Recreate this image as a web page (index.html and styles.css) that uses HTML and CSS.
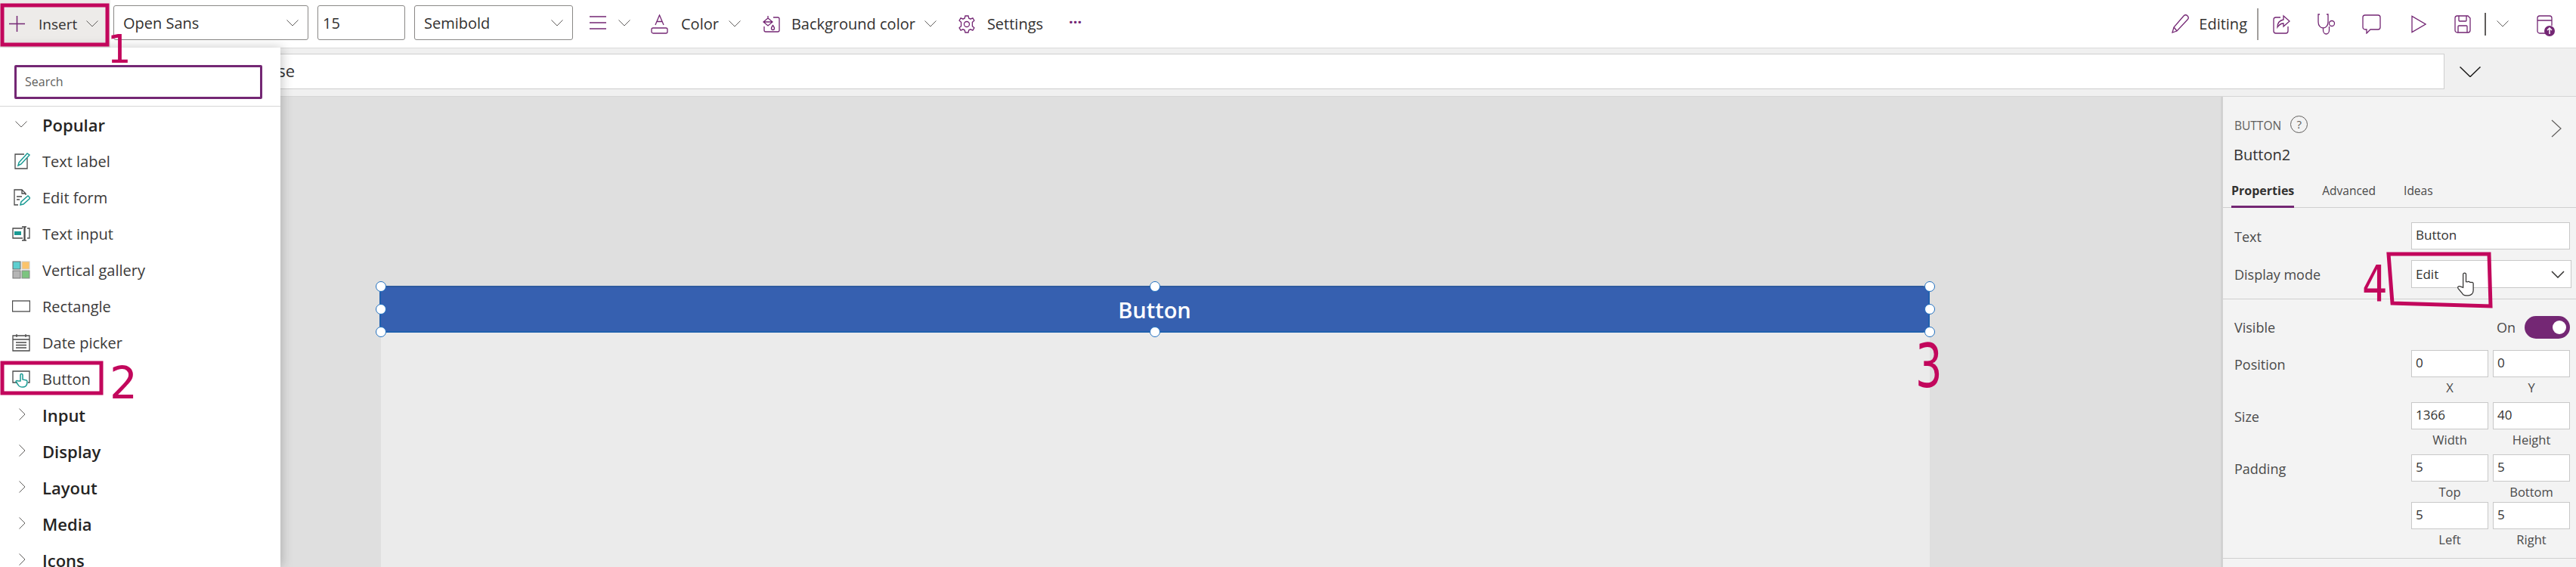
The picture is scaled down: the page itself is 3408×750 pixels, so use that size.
FILE: index.html
```html
<!DOCTYPE html>
<html lang="en">
    <head>
        <meta charset="UTF-8" />
        <title>Power Apps Studio</title>
        <link rel="stylesheet" href="styles.css">
    </head>
    <body>
        <header class="toolbar">
            <div class="insert-btn">
                <svg class="ic-plus" viewBox="0 0 21 21"><path d="M10.5 0v21M0 10.5h21"/></svg>
                <span class="insert-label">Insert</span>
                <svg class="chev insert-chev" viewBox="0 0 16 9"><path d="M.5.5 8 8 15.5.5"/></svg>
            </div>
            <div class="tb-field font-field">Open Sans<svg class="chev" viewBox="0 0 16 9"><path d="M.5.5 8 8 15.5.5"/></svg></div>
            <div class="tb-field size-field">15</div>
            <div class="tb-field weight-field">Semibold<svg class="chev" viewBox="0 0 16 9"><path d="M.5.5 8 8 15.5.5"/></svg></div>

            <svg class="ic ic-align" viewBox="0 0 22 18"><path d="M0 1h22M0 9h22M0 17h22"/></svg>
            <svg class="chev align-chev" viewBox="0 0 16 9"><path d="M.5.5 8 8 15.5.5"/></svg>
            <svg class="ic ic-color" viewBox="0 0 23 26"><path d="M6 14 11.5 1 17 14M8 9.500h7"/><rect x="1" y="18" width="21" height="7" rx="2"/></svg>
            <span class="tb-text color-label">Color</span>
            <svg class="chev color-chev" viewBox="0 0 16 9"><path d="M.5.5 8 8 15.5.5"/></svg>
            <svg class="ic ic-fill" viewBox="0 0 24 24"><path d="M15 3h6a2 2 0 0 1 2 2v15a2 2 0 0 1-2 2H5a2 2 0 0 1-2-2v-5"/><path d="M8 1v3L2 9l6 5 6-5-6-5M2 9h12"/><path d="M14.500 13.500c-1.500 2-2 3-2 4a2 2 0 0 0 4 0c0-1-.5-2-2-4z"/></svg>
            <span class="tb-text fill-label">Background color</span>
            <svg class="chev fill-chev" viewBox="0 0 16 9"><path d="M.5.5 8 8 15.5.5"/></svg>
            <svg class="ic ic-gear" viewBox="0 0 24 24"><circle cx="12" cy="12" r="3.500"/><path d="M10 1h4l.8 3.200 2.200 1 2.900-1.400 2 3.400-2.500 2.200v5.200l2.500 2.200-2 3.400-2.900-1.400-2.200 1L14 23h-4l-.8-3.200-2.200-1-2.900 1.400-2-3.400 2.500-2.200V9.400L2.100 7.200l2-3.400L7 5.200l2.200-1z"/></svg>
            <span class="tb-text settings-label">Settings</span>
            <span class="more-dots">···</span>

            <div class="tb-right">
                <svg class="ic ic-pencil" viewBox="0 0 23 25"><path d="M1 24l2-7L16 2c1.500-1.500 3.500-1.500 5 0s1.500 3.500 0 5L7 22zM3 17l4 5"/></svg>
                <span class="tb-text editing-label">Editing</span>
                <span class="tb-sep tall-sep"></span>
                <svg class="ic ic-share" viewBox="0 0 23 26"><path d="M10 4H4a3 3 0 0 0-3 3v15a3 3 0 0 0 3 3h13a3 3 0 0 0 3-3v-6"/><path d="M14 2l8 7-8 7v-4c-4 0-6 2-8 5 0-6 3-9 8-10z"/></svg>
                <svg class="ic ic-steth" viewBox="0 0 24 28"><path d="M3 1H1v10c0 5 3 8 6.500 8S14 16 14 11V1h-2M7.500 19v3c0 3 2 5 4 5s4-2 4-5v-5"/><circle cx="19" cy="13" r="3.500"/></svg>
                <svg class="ic ic-comment" viewBox="0 0 25 26"><path d="M4 1h17a3 3 0 0 1 3 3v13a3 3 0 0 1-3 3H11l-5 5v-5H4a3 3 0 0 1-3-3V4a3 3 0 0 1 3-3z"/></svg>
                <svg class="ic ic-play" viewBox="0 0 20 24"><path d="M1 1.500v21L19 12z"/></svg>
                <svg class="ic ic-save" viewBox="0 0 22 24"><path d="M4 1h14l3 3v16a3 3 0 0 1-3 3H4a3 3 0 0 1-3-3V4a3 3 0 0 1 3-3z"/><path d="M6 1v6a1 1 0 0 0 1 1h8a1 1 0 0 0 1-1V1M5 23v-8a1 1 0 0 1 1-1h10a1 1 0 0 1 1 1v8"/></svg>
                <span class="tb-sep short-sep"></span>
                <svg class="chev save-chev" viewBox="0 0 16 9"><path d="M.5.5 8 8 15.5.5"/></svg>
                <svg class="ic ic-publish" viewBox="0 0 24 28"><path d="M12 24H4a3 3 0 0 1-3-3V4a3 3 0 0 1 3-3h13a3 3 0 0 1 3 3v10M1 7h19"/><circle class="pub-dot" cx="17" cy="21" r="7"/><path class="pub-arrow" d="M17 25v-8M14 20l3-3 3 3"/></svg>
            </div>
        </header>

        <div class="formula-bar">
            <div class="formula-input">false</div>
            <svg class="formula-chev" viewBox="0 0 28 14"><path d="M.5.5 14 13.500 27.500.5"/></svg>
        </div>

        <main class="workspace">
            <div class="canvas">
                <div class="screen">
                    <div class="app-button">
                        Button
                        <span class="handle h-tl"></span>
                        <span class="handle h-ml"></span>
                        <span class="handle h-bl"></span>
                        <span class="handle h-tc"></span>
                        <span class="handle h-bc"></span>
                        <span class="handle h-tr"></span>
                        <span class="handle h-mr"></span>
                        <span class="handle h-br"></span>
                    </div>
                </div>
            </div>

            <aside class="props">
                <div class="props-type">
                    <span>BUTTON</span>
                    <span class="help-circle">?</span>
                    <svg class="props-close" viewBox="0 0 14 24"><path d="M1 1l12 11L1 23"/></svg>
                </div>
                <div class="props-name">Button2</div>
                <div class="props-tabs">
                    <span class="tab tab-active">Properties</span>
                    <span class="tab">Advanced</span>
                    <span class="tab">Ideas</span>
                </div>

                <div class="props-top">
                    <div class="text-row">
                        <span class="prop-label">Text</span>
                        <div class="prop-input">Button</div>
                    </div>
                    <div class="text-row mode-row">
                        <span class="prop-label">Display mode</span>
                        <div class="prop-input mode-input">Edit
                            <svg class="mode-chev" viewBox="0 0 18 10"><path d="M1 1l8 8 8-8"/></svg>
                        </div>
                    </div>
                </div>

                <div class="props-bottom">
                    <div class="visible-row">
                        <span class="prop-label">Visible</span>
                        <span class="on-label">On</span>
                        <span class="toggle"><span class="toggle-knob"></span></span>
                    </div>
                    <div class="field-row">
                        <span class="prop-label">Position</span>
                        <div class="field"><div class="prop-input">0</div><span class="caption">X</span></div>
                        <div class="field"><div class="prop-input">0</div><span class="caption">Y</span></div>
                    </div>
                    <div class="field-row">
                        <span class="prop-label">Size</span>
                        <div class="field"><div class="prop-input">1366</div><span class="caption">Width</span></div>
                        <div class="field"><div class="prop-input">40</div><span class="caption">Height</span></div>
                    </div>
                    <div class="field-row tight">
                        <span class="prop-label">Padding</span>
                        <div class="field"><div class="prop-input">5</div><span class="caption">Top</span></div>
                        <div class="field"><div class="prop-input">5</div><span class="caption">Bottom</span></div>
                    </div>
                    <div class="field-row tight">
                        <span></span>
                        <div class="field"><div class="prop-input">5</div><span class="caption">Left</span></div>
                        <div class="field"><div class="prop-input">5</div><span class="caption">Right</span></div>
                    </div>
                </div>
            </aside>
        </main>

        <!-- insert flyout sits over the formula bar and canvas -->
        <nav class="insert-panel">
            <div class="search-wrap">
                <div class="search-box">Search</div>
            </div>
            <div class="tree">
                <div class="tree-head"><svg class="chev tree-chev" viewBox="0 0 16 9"><path d="M.5.5 8 8 15.5.5"/></svg>Popular</div>
                <div class="tree-item">
                    <svg class="tree-ic" viewBox="0 0 24 24"><path class="ln" d="M16 3H4v19h16V8"/><path class="tl" d="M8 18l1-4L20 2l3 2-11 12z"/></svg>
                    Text label
                </div>
                <div class="tree-item">
                    <svg class="tree-ic" viewBox="0 0 24 24"><path class="ln" d="M18 9V7l-5-5H3v20h5M13 2v5h5M6 11h7M6 15h4"/><path class="tl" d="M11 22l1-4 9-8 3 3-9 8z"/></svg>
                    Edit form
                </div>
                <div class="tree-item">
                    <svg class="tree-ic" viewBox="0 0 24 24"><path class="ln" d="M14 5H1v13h13M20 5h3v13h-3M13 3h3v18h-3M16 3h3M16 21h3M17 3v18"/><rect class="tl-fill" x="3" y="9" width="9" height="5"/></svg>
                    Text input
                </div>
                <div class="tree-item">
                    <svg class="tree-ic" viewBox="0 0 24 24">
                        <rect class="g1" x="1" y="1" width="10" height="10"/><rect class="g2" x="13" y="1" width="10" height="10"/>
                        <rect class="g3" x="1" y="13" width="10" height="10"/><rect class="g4" x="13" y="13" width="10" height="10"/>
                    </svg>
                    Vertical gallery
                </div>
                <div class="tree-item">
                    <svg class="tree-ic" viewBox="0 0 24 24"><rect class="ln" x=".5" y="5" width="23" height="14"/></svg>
                    Rectangle
                </div>
                <div class="tree-item">
                    <svg class="tree-ic" viewBox="0 0 24 24"><path class="ln" d="M1 3h22v20H1zM1 8h22M6 1v4M18 1v4M5 12h14M5 15.500h14M5 19h14" /></svg>
                    Date picker
                </div>
                <div class="tree-item">
                    <svg class="tree-ic" viewBox="0 0 24 24"><path class="ln" d="M7 17H1V2h22v15h-2"/><path class="tl" d="M11 15V7a1.500 1.500 0 0 1 3 0v6l5 1c1 .5 1 1 1 2 0 4-2 7-6 7-3 0-5-1-6-3l-3-4c0-1.500 2-2 3-1z"/></svg>
                    Button
                </div>
                <div class="tree-head"><svg class="chev-right tree-chev-right" viewBox="0 0 9 16"><path d="M.5.5 8 8 .5 15.500"/></svg>Input</div>
                <div class="tree-head"><svg class="chev-right tree-chev-right" viewBox="0 0 9 16"><path d="M.5.5 8 8 .5 15.500"/></svg>Display</div>
                <div class="tree-head"><svg class="chev-right tree-chev-right" viewBox="0 0 9 16"><path d="M.5.5 8 8 .5 15.500"/></svg>Layout</div>
                <div class="tree-head"><svg class="chev-right tree-chev-right" viewBox="0 0 9 16"><path d="M.5.5 8 8 .5 15.500"/></svg>Media</div>
                <div class="tree-head"><svg class="chev-right tree-chev-right" viewBox="0 0 9 16"><path d="M.5.5 8 8 .5 15.500"/></svg>Icons</div>
            </div>
        </nav>

        <!-- hand drawn tutorial marks on top of the screenshot -->
        <svg class="marks" viewBox="0 0 3408 750">
            <path class="mark-line" d="M3 7H142V59H3Z"/>
            <path class="mark-line" d="M3 480H134V520H3Z"/>
            <path class="mark-line" d="M3160 336L3293 336L3295 405L3165 401Z"/>
            <text class="mark-num" transform="translate(142 83) scale(.95 1)" font-size="52">1</text>
            <text class="mark-num" transform="translate(145 527)" font-size="58">2</text>
            <text class="mark-num" transform="translate(2534 512) scale(.7 1)" font-size="80">3</text>
            <text class="mark-num" transform="translate(3125 398) scale(.8 1)" font-size="66">4</text>
        </svg>

        <svg class="hand-cursor" viewBox="0 0 26 34"><path d="M9 21V3a2 2 0 0 1 4 0v10l2 .2a2 2 0 0 1 3 .3l2 .5a2 2 0 0 1 3 1.500V25c0 4-3 7-7 7h-3c-3 0-5-2-6-4l-5-6c-1-2 1-3.500 3-2.500z"/></svg>
    </body>
</html>
```

FILE: styles.css
```css
* {
    box-sizing: border-box;
}
body {
    margin: 0;
    width: 3408px;
    height: 750px;
    overflow: hidden;
    position: relative;
    display: flex;
    flex-direction: column;
    font-family: "Open Sans", sans-serif;
    color: #323130;
    background-color: #dfdfdf;
}
svg {
    display: block;
    flex: none;
    fill: none;
}

/* toolbar */
.toolbar {
    height: 64px;
    flex: none;
    display: flex;
    align-items: center;
    background-color: #fff;
    border-bottom: 1px solid #dadada;
    font-size: 20px;
}
.tb-right {
    margin-left: auto;
    display: flex;
    align-items: center;
    height: 100%;
}
.insert-btn {
    width: 146px;
    height: 63px;
    flex: none;
    display: flex;
    align-items: center;
    background-color: #edebe9;
    font-size: 19px;
}
.ic-plus {
    width: 21px;
    height: 21px;
    margin-left: 12px;
    stroke: #742774;
    stroke-width: 1.500;
}
.insert-label {
    margin-left: 18px;
}
.chev {
    width: 16px;
    height: 9px;
    stroke: #605e5c;
    stroke-width: 1;
}
.insert-chev {
    margin-left: 12px;
}
.tb-field {
    height: 46px;
    flex: none;
    display: flex;
    align-items: center;
    justify-content: space-between;
    border: 1px solid #8a8886;
    border-radius: 3px;
    padding: 0 12px;
    margin-top: -3px;
}
.font-field {
    width: 258px;
    margin-left: 4px;
}
.size-field {
    width: 116px;
    margin-left: 12px;
    padding: 0 6px;
}
.weight-field {
    width: 210px;
    margin-left: 12px;
}
.ic {
    stroke: #742774;
    stroke-width: 1.300;
}
.ic-align {
    width: 22px;
    height: 18px;
    margin: -3px 0 0 22px;
}
.align-chev {
    margin: -3px 0 0 16px;
}
.ic-color {
    width: 23px;
    height: 26px;
    margin-left: 27px;
}
.color-label {
    margin-left: 17px;
}
.color-chev {
    margin-left: 13px;
}
.ic-fill {
    width: 24px;
    height: 24px;
    margin-left: 28px;
}
.fill-label {
    margin-left: 15px;
}
.fill-chev {
    margin-left: 12px;
}
.ic-gear {
    width: 24px;
    height: 24px;
    margin-left: 28px;
}
.settings-label {
    margin-left: 15px;
}
.more-dots {
    margin: -6px 0 0 34px;
    font-weight: 700;
    color: #742774;
}
.ic-pencil {
    width: 23px;
    height: 25px;
}
.editing-label {
    margin-left: 13px;
}
.tb-sep {
    width: 2px;
    background-color: #a19f9d;
}
.tall-sep {
    height: 42px;
    margin-left: 13px;
}
.ic-share {
    width: 23px;
    height: 26px;
    margin-left: 19px;
}
.ic-steth {
    width: 24px;
    height: 28px;
    margin-left: 36px;
}
.ic-comment {
    width: 25px;
    height: 26px;
    margin-left: 35px;
}
.ic-play {
    width: 20px;
    height: 24px;
    margin-left: 40px;
}
.ic-save {
    width: 22px;
    height: 24px;
    margin-left: 37px;
}
.short-sep {
    height: 30px;
    margin-left: 18px;
    background-color: #605e5c;
}
.save-chev {
    margin-left: 14px;
}
.ic-publish {
    width: 24px;
    height: 28px;
    margin: 4px 28px 0 37px;
}
.pub-dot {
    fill: #742774;
    stroke: none;
}
.pub-arrow {
    stroke: #fff;
    stroke-width: 1.500;
}

/* formula bar */
.formula-bar {
    height: 64px;
    flex: none;
    display: flex;
    align-items: center;
    background-color: #f0f0f0;
    border-bottom: 1px solid #d6d6d6;
    padding-bottom: 2px;
}
.formula-input {
    width: 3234px;
    height: 47px;
    background-color: #fff;
    border: 1px solid #cfcfcf;
    border-left: none;
    padding-left: 342px;
    font-size: 22px;
    line-height: 43px;
}
.formula-chev {
    width: 28px;
    height: 14px;
    margin-left: 20px;
    stroke: #1b1a19;
    stroke-width: 1.500;
}

/* canvas */
.workspace {
    flex: 1;
    display: flex;
    min-height: 0;
}
.canvas {
    flex: 1;
    padding: 250px 0 0 504px;
    overflow: hidden;
}
.screen {
    width: 2049px;
    height: 400px;
    background-color: #ebebeb;
}
.app-button {
    height: 62px;
    margin-left: -2px;
    position: relative;
    display: flex;
    align-items: center;
    justify-content: center;
    background-color: #3660b0;
    border: 2px solid #2060ae;
    border-top-color: #2d5a9f;
    border-radius: 9px;
    color: #fff;
    font-size: 29px;
    font-weight: 600;
}
.handle {
    position: absolute;
    width: 14px;
    height: 14px;
    background-color: #fff;
    border: 1px solid #1f6fc0;
    border-radius: 50%;
}
.h-tl, .h-ml, .h-bl {
    left: -7px;
}
.h-tr, .h-mr, .h-br {
    right: -9px;
}
.h-tc, .h-bc {
    left: calc(50% - 7px);
}
.h-tl, .h-tc, .h-tr {
    top: -8px;
}
.h-ml, .h-mr {
    top: 22px;
}
.h-bl, .h-bc, .h-br {
    bottom: -8px;
}

/* right side properties */
.props {
    width: 470px;
    flex: none;
    background-color: #f3f3f3;
    border-left: 3px solid #d2d2d2;
    font-size: 18px;
}
.props-type {
    height: 38px;
    margin-top: 19px;
    padding: 0 19px 0 15px;
    display: flex;
    align-items: center;
    color: #605e5c;
    font-size: 15.500px;
}
.help-circle {
    width: 23px;
    height: 23px;
    margin: -4px 0 0 12px;
    border: 1px solid #605e5c;
    border-radius: 50%;
    display: flex;
    align-items: center;
    justify-content: center;
    font-size: 15px;
}
.props-close {
    width: 14px;
    height: 24px;
    margin: 8px 0 0 auto;
    stroke: #605e5c;
    stroke-width: 1.200;
}
.props-name {
    height: 40px;
    padding-left: 14px;
    font-size: 20px;
    line-height: 40px;
}
.props-tabs {
    height: 44px;
    margin-top: 6px;
    padding-left: 11px;
    display: flex;
    gap: 37px;
    border-bottom: 1px solid #cfcfcf;
    line-height: 42px;
    font-size: 15.500px;
    color: #4a4a4a;
}
.tab-active {
    height: 44px;
    font-size: 16px;
    font-weight: 700;
    color: #323130;
    border-bottom: 3px solid #742774;
}
.props-top {
    height: 121px;
    padding: 19px 0 0 15px;
    border-bottom: 1px solid #cfcfcf;
}
.text-row, .field-row {
    display: grid;
    grid-template-columns: 228px 102px 102px;
    column-gap: 6px;
}
.text-row {
    grid-template-columns: 234px 1fr;
    column-gap: 0;
    padding-right: 8px;
}
.mode-row {
    margin-top: 12px;
    padding-right: 6px;
}
.prop-label {
    line-height: 38px;
    color: #4a4a4a;
}
.prop-input {
    height: 36px;
    background-color: #fff;
    border: 1px solid #c8c8c8;
    padding-left: 5px;
    line-height: 32px;
    font-size: 17px;
    color: #323130;
}
.mode-input {
    height: 37px;
    display: flex;
    align-items: center;
    justify-content: space-between;
    padding-right: 8px;
}
.mode-chev {
    width: 18px;
    height: 10px;
    stroke: #323130;
    stroke-width: 1.500;
}
.props-bottom {
    height: 343px;
    padding: 22px 0 0 15px;
    border-bottom: 1px solid #cfcfcf;
}
.visible-row {
    height: 30px;
    margin-bottom: 15px;
    padding-right: 8px;
    display: flex;
    align-items: center;
}
.visible-row .prop-label {
    flex: 1;
}
.on-label {
    margin-right: 12px;
    color: #4a4a4a;
}
.toggle {
    width: 60px;
    height: 30px;
    padding-right: 5px;
    display: flex;
    align-items: center;
    justify-content: flex-end;
    background-color: #742774;
    border-radius: 15px;
}
.toggle-knob {
    width: 18px;
    height: 18px;
    background-color: #fff;
    border-radius: 50%;
}
.field-row {
    margin-bottom: 6px;
}
.field-row.tight {
    margin-bottom: 0;
}
.field {
    display: flex;
    flex-direction: column;
}
.caption {
    height: 27px;
    line-height: 27px;
    text-align: center;
    font-size: 16.500px;
    color: #4a4a4a;
}

/* insert flyout */
.insert-panel {
    position: absolute;
    left: 0;
    top: 63px;
    width: 371px;
    height: 687px;
    overflow: hidden;
    background-color: #fff;
    box-shadow: 2px 0 14px rgba(0, 0, 0, 0.22);
}
.search-wrap {
    height: 78px;
    padding: 23px 24px 0 19px;
    border-bottom: 1px solid #d6d6d6;
}
.search-box {
    height: 45px;
    border: 3px solid #742774;
    border-radius: 2px;
    padding-left: 11px;
    line-height: 38px;
    font-size: 16px;
    color: #605e5c;
}
.tree-head, .tree-item {
    height: 48px;
    display: flex;
    align-items: center;
    padding-left: 56px;
    position: relative;
}
.tree-head {
    font-size: 22px;
    font-weight: 600;
    color: #252423;
}
.tree-item {
    font-size: 20px;
    color: #3b3a39;
}
.tree-chev {
    position: absolute;
    left: 20px;
    top: 19px;
}
.chev-right {
    width: 9px;
    height: 16px;
    stroke: #605e5c;
    stroke-width: 1;
}
.tree-chev-right {
    position: absolute;
    left: 25px;
    top: 15px;
}
.tree-ic {
    position: absolute;
    left: 16px;
    top: 12px;
    width: 24px;
    height: 24px;
}
.ln {
    stroke: #4a4a4a;
    stroke-width: 1.300;
}
.tl {
    stroke: #1a9a93;
    stroke-width: 1.500;
}
.tl-fill {
    fill: #1a9a93;
}
.g1 {
    fill: #5ecfd0;
    stroke: #666;
}
.g2 {
    fill: #fbc36b;
    stroke: #ccc;
}
.g3 {
    fill: #b5b5b5;
    stroke: #777;
}
.g4 {
    fill: #7cc47f;
    stroke: #888;
}

/* tutorial marks */
.marks {
    position: absolute;
    left: 0;
    top: 0;
    width: 3408px;
    height: 750px;
    pointer-events: none;
}
.mark-line {
    fill: none;
    stroke: #c2075c;
    stroke-width: 5;
}
.mark-num {
    fill: #c2075c;
    font-family: "DejaVu Sans", sans-serif;
}
.hand-cursor {
    position: absolute;
    left: 3250px;
    top: 360px;
    width: 25px;
    height: 33px;
    fill: #fff;
    stroke: #323130;
    stroke-width: 1.300;
}
```
